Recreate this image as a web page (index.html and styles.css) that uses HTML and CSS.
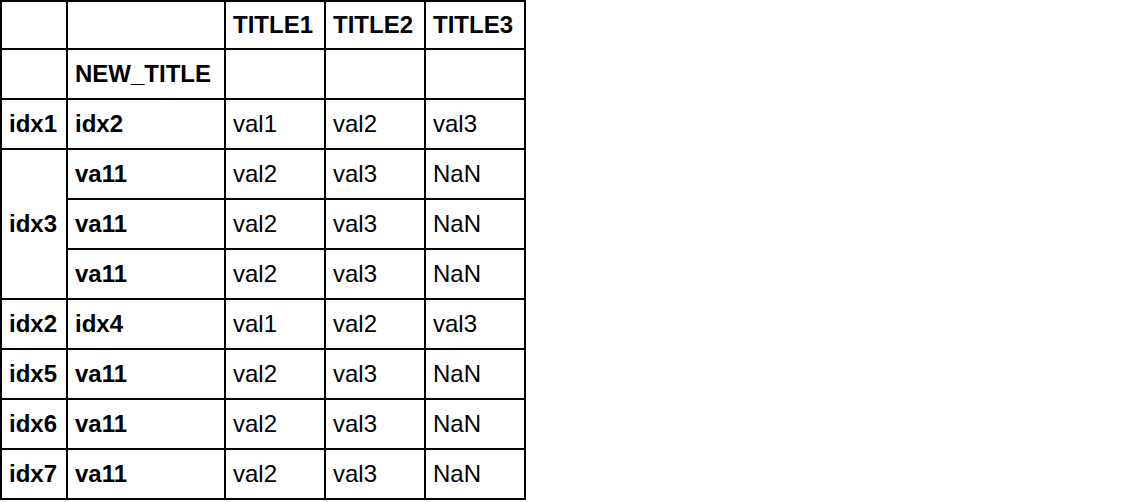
FILE: index.html
```html
<!DOCTYPE html>
<html>
<head>
<meta charset="utf-8">
<link rel="stylesheet" href="styles.css">
</head>
<body>
<table class="frame">
  <thead>
    <tr>
      <th class="c1"></th>
      <th class="c2"></th>
      <th class="c3">TITLE1</th>
      <th class="c3">TITLE2</th>
      <th class="c3">TITLE3</th>
    </tr>
    <tr>
      <th></th>
      <th>NEW_TITLE</th>
      <th></th>
      <th></th>
      <th></th>
    </tr>
  </thead>
  <tbody>
    <tr><th>idx1</th><th>idx2</th><td>val1</td><td>val2</td><td>val3</td></tr>
    <tr><th rowspan="3">idx3</th><th>va11</th><td>val2</td><td>val3</td><td>NaN</td></tr>
    <tr><th>va11</th><td>val2</td><td>val3</td><td>NaN</td></tr>
    <tr><th>va11</th><td>val2</td><td>val3</td><td>NaN</td></tr>
    <tr><th>idx2</th><th>idx4</th><td>val1</td><td>val2</td><td>val3</td></tr>
    <tr><th>idx5</th><th>va11</th><td>val2</td><td>val3</td><td>NaN</td></tr>
    <tr><th>idx6</th><th>va11</th><td>val2</td><td>val3</td><td>NaN</td></tr>
    <tr><th>idx7</th><th>va11</th><td>val2</td><td>val3</td><td>NaN</td></tr>
  </tbody>
</table>
</body>
</html>
```

FILE: styles.css
```css
html, body {
  margin: 0;
  padding: 0;
  background: #ffffff;
}

body {
  font-family: "Liberation Sans", Arial, sans-serif;
  color: #000000;
}

.frame {
  border-collapse: separate;
  border-spacing: 0;
  table-layout: fixed;
  width: 526px;
  border-top: 2px solid #000;
  border-left: 2px solid #000;
  font-size: 24px;
}

.frame th,
.frame td {
  box-sizing: content-box;
  height: 48px;
  padding: 0 7px;
  border-right: 2px solid #000;
  border-bottom: 2px solid #000;
  text-align: left;
  vertical-align: middle;
  white-space: nowrap;
  overflow: hidden;
}

.frame th {
  font-weight: bold;
}

.frame td {
  font-weight: normal;
}

.frame .c1 {
  box-sizing: border-box;
  width: 66px;
}

.frame .c2 {
  box-sizing: border-box;
  width: 158px;
}

.frame .c3 {
  box-sizing: border-box;
  width: 100px;
}
```
